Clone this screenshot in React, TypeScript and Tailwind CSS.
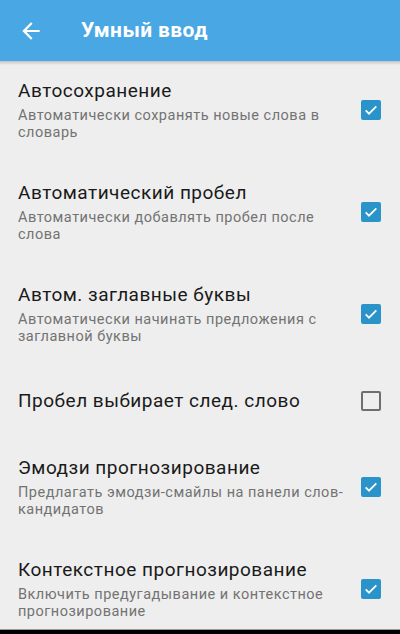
import { useState } from "react";

type Pref = {
  title: string;
  summary?: string;
  checked: boolean;
};

const prefs: Pref[] = [
  { title: "Автосохранение", summary: "Автоматически сохранять новые слова в словарь", checked: true },
  { title: "Автоматический пробел", summary: "Автоматически добавлять пробел после слова", checked: true },
  { title: "Автом. заглавные буквы", summary: "Автоматически начинать предложения с заглавной буквы", checked: true },
  { title: "Пробел выбирает след. слово", checked: false },
  { title: "Эмодзи прогнозирование", summary: "Предлагать эмодзи-смайлы на панели слов-кандидатов", checked: true },
  { title: "Контекстное прогнозирование", summary: "Включить предугадывание и контекстное прогнозирование", checked: true },
];

function CheckBox({ checked, onClick }: { checked: boolean; onClick: () => void }) {
  return (
    <button
      onClick={onClick}
      className={`w-5 h-5 shrink-0 rounded-[2px] flex items-center justify-center ${
        checked ? "bg-[#2a93c9]" : "border-2 border-[#6e6e6e]"
      }`}
    >
      {checked && (
        <svg width="16" height="16" viewBox="0 0 24 24">
          <path d="M4 12.5l5 5L20 6.5" fill="none" stroke="#fff" strokeWidth="2.6" />
        </svg>
      )}
    </button>
  );
}

export default function App() {
  const [items, setItems] = useState(prefs);

  const toggle = (i: number) =>
    setItems((prev) => prev.map((p, idx) => (idx === i ? { ...p, checked: !p.checked } : p)));

  return (
    <div className="relative h-[634px] overflow-hidden bg-[#eeeeee] font-['Roboto',sans-serif]">
      {/* toolbar */}
      <div className="relative z-10 h-[61px] bg-[#49a7e4] flex items-center">
        <svg className="ml-[18px]" width="26" height="26" viewBox="0 0 24 24">
          <path fill="#fff" d="M20 11H7.83l5.59-5.59L12 4l-8 8 8 8 1.41-1.41L7.83 13H20v-2z" />
        </svg>
        <h1 className="ml-[37px] text-white text-[21px] font-bold tracking-[0.4px]">Умный ввод</h1>
        <div className="absolute left-0 right-0 top-full h-1 bg-gradient-to-b from-[#c4c4c4] to-[#eeeeee00]" />
      </div>

      {/* list */}
      <div className="-mt-[2px]">
        {items.map((p, i) => (
          <div
            key={i}
            className={`flex items-center pl-[18px] pr-[19px] ${p.summary ? "h-[102px]" : "h-[71px]"}`}
          >
            <div className="flex-1 mr-4">
              <div className="text-[19px] leading-[24px] tracking-[0.5px] text-[#1a1a1a]">{p.title}</div>
              {p.summary && (
                <div className="mt-1 text-[14.5px] leading-[17px] tracking-[0.5px] text-[#737373]">
                  {p.summary}
                </div>
              )}
            </div>
            <CheckBox checked={p.checked} onClick={() => toggle(i)} />
          </div>
        ))}
      </div>

      {/* nav bar edge */}
      <div className="absolute left-0 right-0 bottom-0 h-[5px] bg-black border-t border-[#9a9a9a]" />
    </div>
  );
}
